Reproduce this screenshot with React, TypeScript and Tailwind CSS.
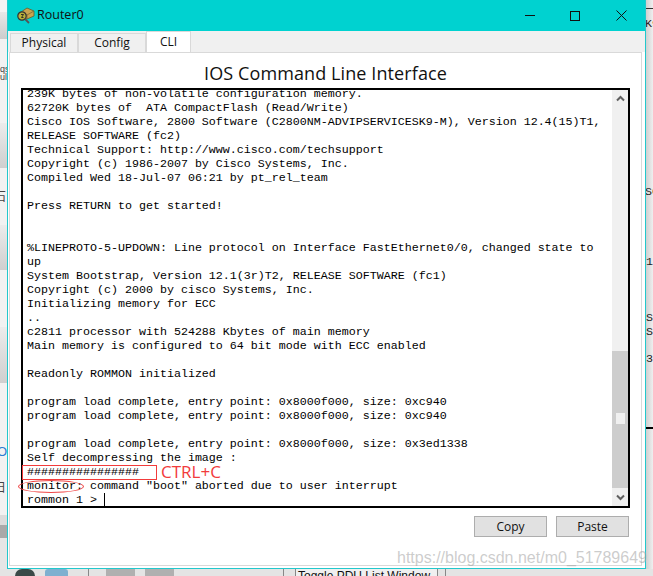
const LINES = [
  "239K bytes of non-volatile configuration memory.",
  "62720K bytes of  ATA CompactFlash (Read/Write)",
  "Cisco IOS Software, 2800 Software (C2800NM-ADVIPSERVICESK9-M), Version 12.4(15)T1,",
  "RELEASE SOFTWARE (fc2)",
  "Technical Support: http://www.cisco.com/techsupport",
  "Copyright (c) 1986-2007 by Cisco Systems, Inc.",
  "Compiled Wed 18-Jul-07 06:21 by pt_rel_team",
  "",
  "Press RETURN to get started!",
  "",
  "",
  "%LINEPROTO-5-UPDOWN: Line protocol on Interface FastEthernet0/0, changed state to",
  "up",
  "System Bootstrap, Version 12.1(3r)T2, RELEASE SOFTWARE (fc1)",
  "Copyright (c) 2000 by cisco Systems, Inc.",
  "Initializing memory for ECC",
  "..",
  "c2811 processor with 524288 Kbytes of main memory",
  "Main memory is configured to 64 bit mode with ECC enabled",
  "",
  "Readonly ROMMON initialized",
  "",
  "program load complete, entry point: 0x8000f000, size: 0xc940",
  "program load complete, entry point: 0x8000f000, size: 0xc940",
  "",
  "program load complete, entry point: 0x8000f000, size: 0x3ed1338",
  "Self decompressing the image :",
  "################",
  'monitor: command "boot" aborted due to user interrupt',
];

function RouterIcon() {
  return (
    <svg width="20" height="20" viewBox="0 0 20 20">
      <path d="M6 6 L12 2 L19 5 L19 10 L12 13 L6 10 Z" fill="#c9a44f" stroke="#6b5a2a" strokeWidth="0.8" />
      <path d="M6 6 L12 9 L19 5 M12 9 L12 13" fill="none" stroke="#7d6a34" strokeWidth="0.8" />
      <circle cx="7" cy="10" r="4.2" fill="#b9b23a" stroke="#333" strokeWidth="1.2" />
      <path d="M6 8.5 H8.5 L6.5 11.5 H8.5" fill="none" stroke="#222" strokeWidth="0.9" />
      <path d="M10 13 L14 17" stroke="#555" strokeWidth="1.8" />
    </svg>
  );
}

function Tab({ label, active }: { label: string; active?: boolean }) {
  if (active) {
    return (
      <div className="h-[21px] w-[45px] bg-white border border-b-0 border-[#d9d9d9] flex items-center justify-center text-[12px] text-[#111]">
        {label}
      </div>
    );
  }
  return (
    <div className="h-[19px] bg-[#f0f0f0] border border-b-0 border-[#d9d9d9] flex items-center justify-center text-[12px] text-[#111] w-[68px] last:w-[60px]">
      {label}
    </div>
  );
}

export default function App() {
  return (
    <div className="w-[653px] h-[576px] relative overflow-hidden bg-[#f4f4f4] font-['Open_Sans','Noto_Sans',sans-serif]">
      <div className="flex h-[569px]">
        {/* left edge of the app behind */}
        <div className="w-[7px] flex flex-col">
          <div className="h-[12px] bg-[#f4f4f4]" />
          <div className="h-[27px] bg-gradient-to-b from-[#e8e8e8] to-[#cccccc]" />
          <div className="h-[84px] bg-[#f2f2f2]" />
          <div className="h-[45px] bg-gradient-to-b from-[#ececec] to-[#cfcfcf]" />
          <div className="h-[57px] bg-[#f2f2f2]" />
          <div className="h-[45px] bg-gradient-to-b from-[#ececec] to-[#cfcfcf]" />
          <div className="h-[57px] bg-[#f2f2f2]" />
          <div className="h-[56px] bg-gradient-to-b from-[#ececec] to-[#cfcfcf]" />
          <div className="h-[132px] bg-[#f2f2f2]" />
          <div className="h-[10px] bg-[#dcdcdc]" />
          <div className="h-[13px] bg-[#a9a9a9]" />
          <div className="flex-1 bg-[#e6e6e6]" />
        </div>

        {/* window */}
        <div className="w-[639px] border-l border-r border-b border-[#22c8cc] flex flex-col bg-white">
          <div className="h-[31px] bg-[#00d2d0] flex items-center pl-[7px] shrink-0">
            <RouterIcon />
            <span className="ml-[2px] text-[12.5px] text-[#111]">Router0</span>
            <div className="ml-auto flex items-center">
              <svg width="10" height="2" viewBox="0 0 10 2" className="mr-[35px]">
                <rect width="10" height="1" fill="#111" />
              </svg>
              <svg width="10" height="10" viewBox="0 0 10 10" className="mr-[36px]">
                <rect x="0.5" y="0.5" width="9" height="9" fill="none" stroke="#111" />
              </svg>
              <svg width="11" height="11" viewBox="0 0 11 11" className="mr-[18px]">
                <path d="M0.5 0.5 L10.5 10.5 M10.5 0.5 L0.5 10.5" stroke="#111" strokeWidth="1" />
              </svg>
            </div>
          </div>

          <div className="h-[21px] bg-[#f0f0f0] flex items-end pl-[2px] shrink-0">
            <Tab label="Physical" />
            <Tab label="Config" />
            <Tab label="CLI" active />
          </div>

          <div className="flex-1 flex flex-col pl-[11px] pr-[11px] ml-[1px] mr-[3px] mb-[2px] border border-[#d9d9d9]">
            <div className="h-[35px] pt-[6px] flex items-center justify-center text-[18px] tracking-[0.1px] text-[#111] shrink-0">
              IOS Command Line Interface
            </div>
            <div className="h-[420px] border-2 border-black flex relative shrink-0">
              <div className="flex-1 pl-[4px] overflow-hidden font-['Liberation_Mono',monospace] text-[11.67px] leading-[14px] text-black">
                <div className="-mt-[3px]">
                  {LINES.map((line, i) => (
                    <div key={i} className="h-[14px] whitespace-pre">
                      {line}
                    </div>
                  ))}
                  <div className="h-[14px] flex whitespace-pre">
                    <span>rommon 1 &gt;</span>
                    <span className="ml-[7px] h-[14px] w-px bg-black" />
                  </div>
                </div>
              </div>
              <div className="w-[16px] flex flex-col shrink-0">
                <div className="h-[261px] bg-[#f0f0f0] flex justify-center pt-[5px]">
                  <svg width="9" height="7" viewBox="0 0 9 7">
                    <path d="M1 5.5 L4.5 2 L8 5.5" fill="none" stroke="#606060" strokeWidth="2" />
                  </svg>
                </div>
                <div className="h-[137px] bg-[#cdcdcd] pt-[62px] flex justify-center">
                  <div className="w-[9px] h-[11px] bg-[#f0f0f0]" />
                </div>
                <div className="flex-1 bg-[#f0f0f0] flex justify-center items-center">
                  <svg width="9" height="7" viewBox="0 0 9 7">
                    <path d="M1 1.5 L4.5 5 L8 1.5" fill="none" stroke="#606060" strokeWidth="2" />
                  </svg>
                </div>
              </div>
            </div>
            <div className="flex justify-end gap-[9px] mt-[8px] pr-[1px]">
              <button className="w-[73px] h-[21px] bg-[#e1e1e1] border border-[#adadad] text-[12px] text-[#111]">Copy</button>
              <button className="w-[73px] h-[21px] bg-[#e1e1e1] border border-[#adadad] text-[12px] text-[#111]">Paste</button>
            </div>
          </div>
        </div>

        {/* right edge of the app behind */}
        <div className="flex-1 bg-gradient-to-r from-[#d0d0d0] to-[#efefef]" />
      </div>

      {/* strip of the app below the window */}
      <div className="h-[7px] flex items-start bg-[#e4e4e4] overflow-hidden">
        <div className="ml-[15px] w-[20px] h-[7px] rounded-t-full bg-[#3a4a48]" />
        <div className="ml-[10px] w-[23px] h-[7px] rounded-t-[3px] bg-[#7fb0d0]" />
        <div className="ml-[20px] w-px h-[7px] bg-[#888]" />
        <div className="ml-[17px] w-[29px] h-[7px] bg-[#b0b0b0]" />
        <div className="ml-[10px] w-[29px] h-[7px] bg-[#b0b0b0]" />
        <div className="ml-[109px] w-px h-[7px] bg-[#888]" />
        <div className="ml-[11px] h-[7px] w-[143px] shrink-0 border-l border-r border-[#888] bg-[#f0f0f0] pl-[2px] text-[12px] leading-[14px] text-[#111] font-['Liberation_Sans',sans-serif] whitespace-nowrap">
          Toggle PDU List Window
        </div>
        <div className="ml-[7px] w-px h-[7px] bg-[#888]" />
      </div>

      {/* text of the app behind, showing at the window's edges */}
      <div className="absolute left-0 top-[65px] w-[7px] overflow-hidden text-[9px] leading-[8px] text-[#444] font-['Liberation_Sans',sans-serif]">
        <div>qs</div>
        <div>ul</div>
      </div>
      <div className="absolute left-0 top-[189px] w-[7px] overflow-hidden text-[12px] leading-[14px] text-[#444] font-['Noto_Sans_CJK_SC',sans-serif]">
        <div className="w-[14px] -ml-[6px]">石</div>
      </div>
      <div className="absolute left-0 top-[445px] w-[7px] overflow-hidden text-[13px] leading-[14px] text-[#2b7cd3] font-['Liberation_Sans',sans-serif]">
        <div className="-ml-[3px]">O</div>
      </div>
      <div className="absolute left-0 top-[480px] w-[7px] overflow-hidden text-[12px] leading-[14px] text-[#444] font-['Noto_Sans_CJK_SC',sans-serif]">
        <div className="w-[14px] -ml-[6px]">日</div>
      </div>
      <div className="absolute left-[646px] top-[17px] w-[7px] overflow-hidden font-['Liberation_Mono',monospace] text-[11.67px] leading-[14px] text-[#222]">
        <div className="-ml-[1px]">K9</div>
      </div>
      <div className="absolute left-[646px] top-[185px] w-[7px] overflow-hidden font-['Liberation_Mono',monospace] text-[11.67px] leading-[14px] text-[#222]">
        <div className="-ml-[1px]">SC</div>
      </div>
      <div className="absolute left-[646px] top-[255px] w-[7px] overflow-hidden font-['Liberation_Mono',monospace] text-[11.67px] leading-[14px] text-[#222]">1</div>
      <div className="absolute left-[646px] top-[311px] w-[7px] overflow-hidden font-['Liberation_Mono',monospace] text-[11.67px] leading-[14px] text-[#222]">
        <div>S</div>
        <div>S</div>
      </div>
      <div className="absolute left-[646px] top-[352px] w-[7px] overflow-hidden font-['Liberation_Mono',monospace] text-[11.67px] leading-[14px] text-[#222]">
        <div>3</div>
      </div>
      <div className="absolute left-[646px] top-[427px] w-[7px] h-[2px] bg-black" />
      <div className="absolute left-[646px] top-[8px] w-[7px] h-px bg-[#333]" />

      {/* annotations pasted on the screenshot */}
      <div className="absolute left-[22px] top-[465px] w-[135px] h-[15px] border border-[#f23b3b]" />
      <div className="absolute left-[161px] top-[462px] text-[17px] leading-[20px] text-[#f23b3b]">CTRL+C</div>
      <div className="absolute left-[18px] top-[480px] w-[66px] h-[13px] rounded-[50%] border border-[#f04848]" />
      <div className="absolute left-[397px] top-[548px] text-[16px] leading-[20px] text-[#9a9a9a]/50 font-['Liberation_Sans',sans-serif] whitespace-nowrap">
        https://blog.csdn.net/m0_51789649
      </div>
    </div>
  );
}
